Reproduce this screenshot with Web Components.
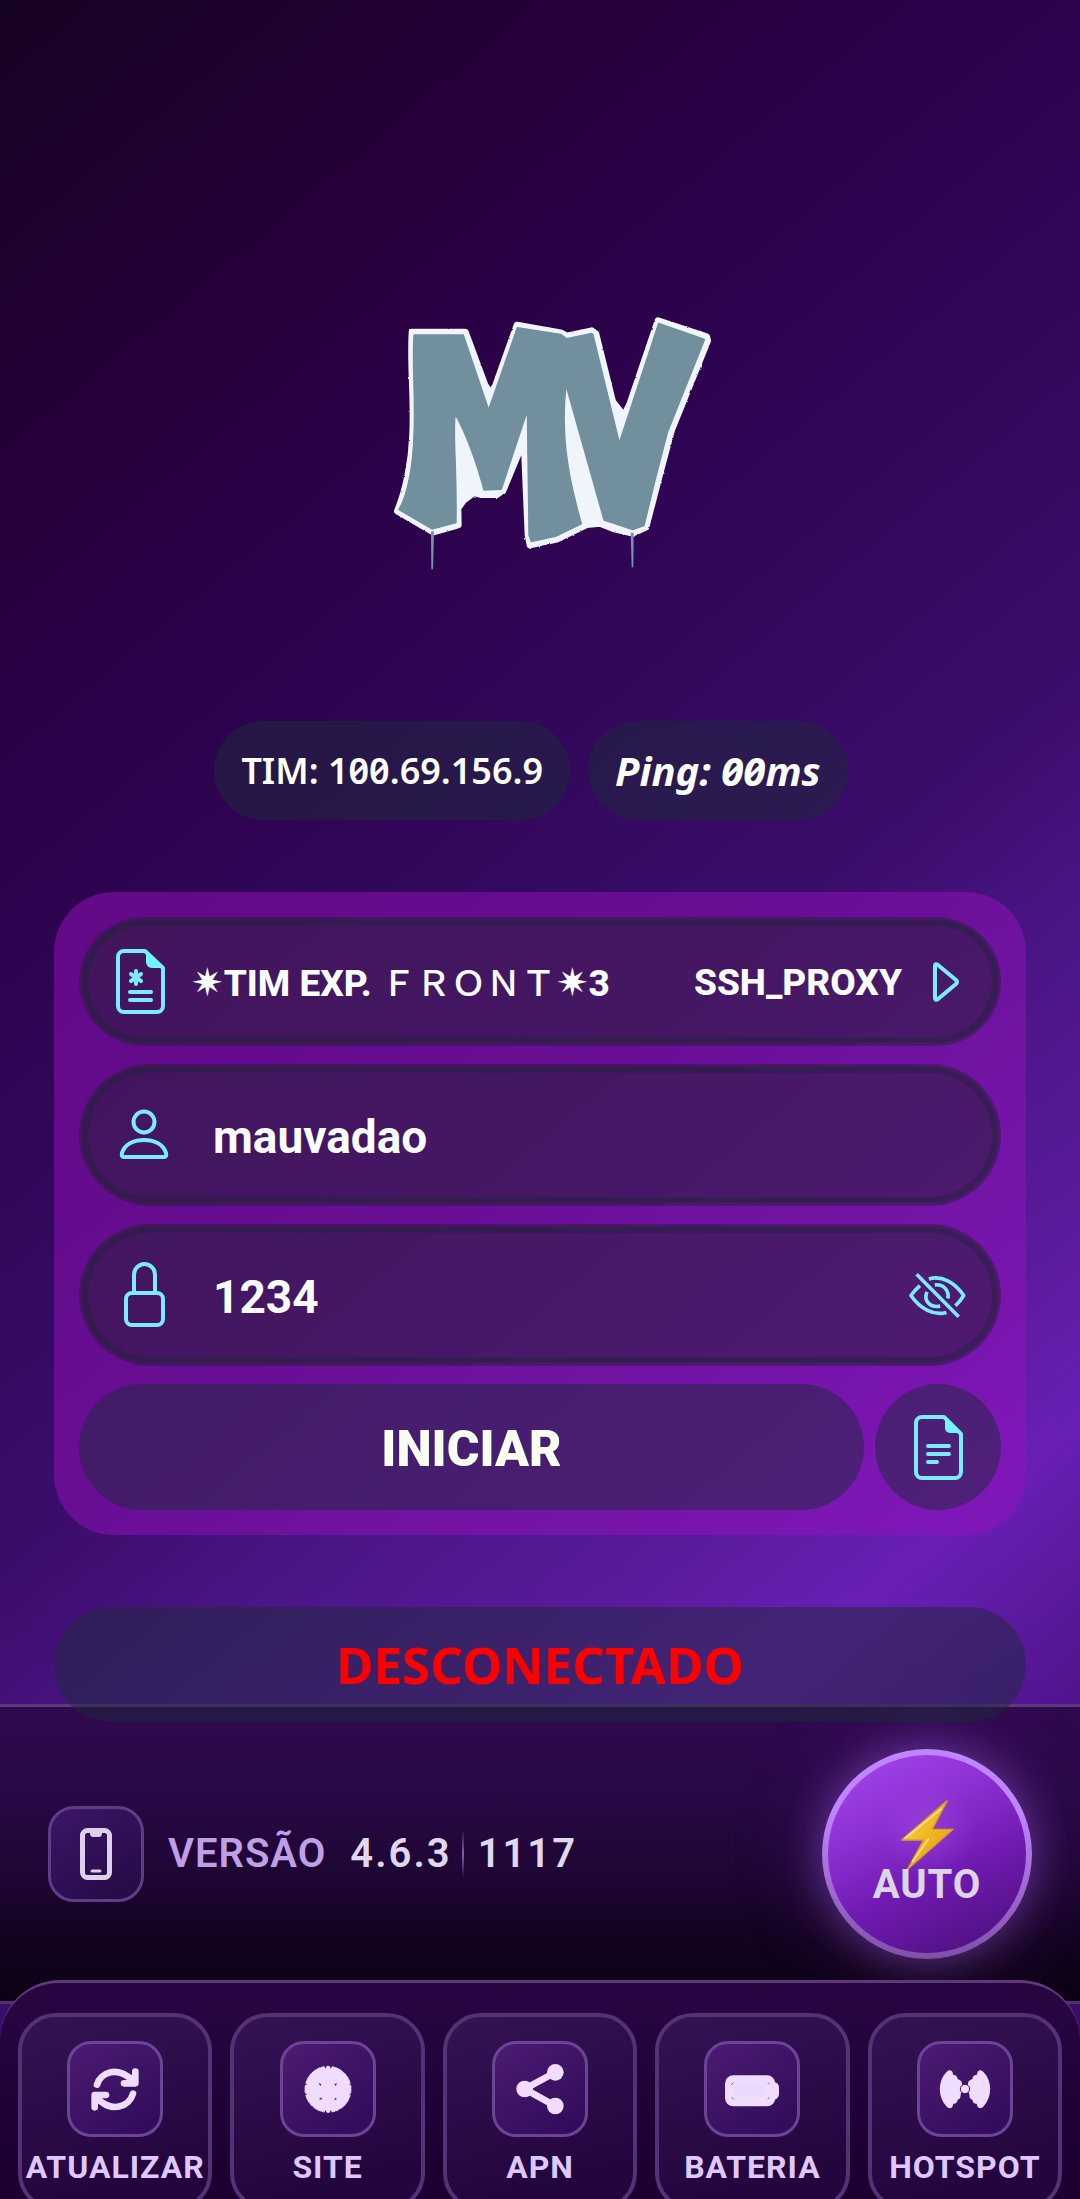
<!DOCTYPE html>
<html lang="pt-BR">
<head>
<meta charset="utf-8">
<meta name="viewport" content="width=device-width, initial-scale=1">
<title>MV</title>
<style>
  html, body { margin: 0; height: 100%; background: #170322; }
</style>
</head>
<body>
<mv-app></mv-app>
<script>
const define = (name, html, setup) => {
  const template = document.createElement('template');
  template.innerHTML = html;
  customElements.define(name, class extends HTMLElement {
    constructor() {
      super();
      this.attachShadow({ mode: 'open' }).append(template.content.cloneNode(true));
    }
    connectedCallback() { if (setup) setup(this, this.shadowRoot); }
  });
};

const ICONS = {
  config: ['0 0 49 65', 49, 65, `<path d="M29 2H8a6 6 0 0 0-6 6v49a6 6 0 0 0 6 6h33a6 6 0 0 0 6-6V19z"/><path d="M30 1l18 18H36a6 6 0 0 1-6-6z" fill="#6ff6ff" stroke="none"/><path d="M14 43h21M14 51h21M20 22v13M15 25l10 7M25 25l-10 7" stroke-linecap="round"/>`],
  doc: ['0 0 49 65', 49, 65, `<path d="M30 2H8a6 6 0 0 0-6 6v49a6 6 0 0 0 6 6h33a6 6 0 0 0 6-6V19z"/><path d="M31 1l17 17H36a5 5 0 0 1-5-5z" fill="#6ff6ff" stroke="none"/><path d="M14 31h21M14 39h21M14 47h9" stroke-linecap="round"/>`],
  user: ['0 0 50 50', 50, 50, `<circle cx="25" cy="12" r="10.500"/><path d="M5 47h40q3 0 2-4c-3-9-12-13-22-13S6 34 3 43q-1 4 2 4z"/>`],
  lock: ['0 0 50 66', 50, 66, `<rect x="7" y="31" width="37" height="32" rx="6"/><path d="M15 31V13a10.500 11 0 0 1 21 0v18"/>`],
  play: ['0 0 27 40', 27, 40, `<path d="M3 4q0-3 3-1l18 15q2 2 0 4L6 37q-3 2-3-1z"/>`],
  eye: ['927 213 172 140', 57, 47, `<g stroke-width="11"><path d="M950 219L1077 347"/><path d="M960 253Q944 267 933 283C960 323 1003 345 1040 334M987 233C1025 221 1066 244 1092 283Q1082 300 1067 314"/><path d="M981 272C970 300 992 321 1021 315M1005 251C1033 248 1049 270 1044 292"/></g>`],
  phone: ['0 0 32 52', 32, 52, `<rect x="2.500" y="2.500" width="27" height="47" rx="5" stroke-width="5"/><path d="M10 2h12v3q0 4-3 4h-6q-3 0-3-4z" fill="currentColor" stroke="none"/><path d="M12 43h8" stroke-width="3" stroke-linecap="round"/>`],
  bolt: ['1014 650 166 216', 55, 72, `<defs><linearGradient id="b" x1="0" y1="0" x2="1" y2="1"><stop offset="0" stop-color="#ffd75a"/><stop offset=".5" stop-color="#f0b624"/><stop offset="1" stop-color="#d89a18"/></linearGradient></defs><path d="M1156 655L1111 741H1174L1037 861L1085 773H1019Z" fill="url(#b)" stroke="#dfa01c" stroke-width="4" stroke-linejoin="round"/><path d="M1138 680L1030 767M1100 770L1052 838" stroke="#ffe58a" stroke-width="5" stroke-linecap="round"/>`],
  refresh: ['255 296 180 180', 60, 60, `<g stroke-width="20" stroke-linecap="round" stroke-linejoin="round"><path d="M291 373C302 337 352 313 402 364M406 334V369H372M284 441V404H318M399 400C388 439 334 461 288 410"/></g>`],
  site: ['894 296 180 180', 60, 60, `<circle cx="984" cy="387" r="69" fill="currentColor" stroke="none"/><circle cx="984" cy="387" r="69" stroke-width="3" stroke-dasharray="27 3 11 2"/><g fill="#3c1462" stroke="none"><path d="M972 316l5 9 3-9zM989 316l3 9 5-9zM972 458l5-9 3 9zM989 458l3-9 5 9zM913 368l9 4-9 3zM1056 368l-9 4 9 3zM913 398l9 4-9 3zM1056 398l-9 4 9 3z"/><path d="M956 369l8 2-3 6zM1011 369l-8 2 4 6zM957 416l8 2-1-7zM1011 416l-8 3 2-7z"/></g>`],
  apn: ['270 296 180 180', 60, 60, `<path d="M406 336L314 386L406 437" stroke-width="20"/><g fill="currentColor" stroke="none"><circle cx="406" cy="336" r="25"/><circle cx="314" cy="386" r="25"/><circle cx="406" cy="437" r="25"/></g>`],
  battery: ['906 296 180 180', 60, 60, `<rect x="915" y="345" width="151" height="93" rx="25" fill="currentColor" stroke="none"/><rect x="1040" y="365" width="37" height="53" rx="16" fill="currentColor" stroke="none"/><path d="M934 374l6-7M1048 371l-4-4M935 411l6 6M1048 412l-5 4" stroke="#3c1462" stroke-width="2"/><rect x="944" y="376" width="90" height="32" fill="#e8d8fb" stroke="none"/>`],
  hotspot: ['465 296 180 180', 60, 60, `<g fill="currentColor" stroke="none"><path id="w" d="M517 334Q508 325 499 336C473 362 473 411 499 438Q508 449 517 440L520 430Q531 431 533 418Q543 416 542 402L548 386L546 371Q547 361 533 356Q531 343 520 344Z"/><use href="#w" transform="translate(1110 0) scale(-1 1)"/></g><circle cx="555" cy="386" r="14" fill="currentColor" stroke="#3c1462" stroke-width="3"/>`]
};

define('mv-icon', `
<style>:host { display: block; flex: none; } svg { display: block; overflow: visible; }</style>
<svg fill="none" stroke="currentColor" stroke-width="4" stroke-linejoin="round" aria-hidden="true"></svg>`,
(el, root) => {
  const [box, w, h, art] = ICONS[el.getAttribute('name')];
  const svg = root.querySelector('svg');
  svg.setAttribute('viewBox', box);
  svg.setAttribute('width', w);
  svg.setAttribute('height', h);
  svg.innerHTML = art;
});

const icon = name => {
  const node = document.createElement('mv-icon');
  node.setAttribute('name', name);
  return node;
};

define('mv-logo', `
<style>:host { display: block; } svg { display: block; margin: 0 auto; }</style>
<svg width="360" height="300" viewBox="-30 0 1080 900" role="img" aria-label="MV">
  <defs>
    <filter id="spray" x="-5%" y="-5%" width="110%" height="110%">
      <feTurbulence type="fractalNoise" baseFrequency=".07" numOctaves="2" seed="4"/>
      <feDisplacementMap in="SourceGraphic" scale="6" xChannelSelector="R" yChannelSelector="G"/>
      <feGaussianBlur stdDeviation="2"/>
    </filter>
  </defs>
  <g stroke-linejoin="round">
    <path filter="url(#spray)" fill="#f0f5fb" stroke="#f0f5fb" stroke-width="20" d="M126 126H286L345 285L362 310L376 288L441 105L572 128L590 138L665 122L678 132L728 335L762 378L780 340L864 92L1010 140L1013 152L905 420L870 550L828 712L788 730L730 716L690 700L650 704L560 748L480 765L474 735L462 450L400 600L380 614H335L312 608L280 632L264 655L265 705L190 726L82 663C105 610 125 520 128 430C133 320 120 230 126 126Z"/>
    <path fill="#728f9d" stroke="#728f9d" stroke-width="4" d="M132 135H280L356 359L442 113L572 133L590 146L665 130L669 134L748 458L866 100L1004 148L893 425L858 560L822 707L788 719L702 690L588 286C573 420 588 540 634 700L634 702L560 738L484 755L477 735L472 362L394 598L342 600C312 490 282 420 256 373C247 430 261 520 258 698L186 717L87 659C115 610 130 520 132 430C137 320 126 230 132 135Z"/>
    <path fill="#7c91ab" d="M183 724H192L189 838H184ZM782 728H791L790 832H785Z"/>
  </g>
</svg>`);

define('mv-pill', `
<style>
  :host { display: block; box-sizing: border-box; padding: 24px 27px; border-radius: 50px; margin-right: 18px;
    background: rgba(30, 41, 59, .5); color: #fdfff8;
    font: 600 36px/51px "Noto Sans", sans-serif; font-feature-settings: "zero"; white-space: nowrap; }
  :host([strong]) { font-size: 40px; font-weight: 700; font-style: italic; }
</style><slot></slot>`);

const fieldBox = `
  box-sizing: border-box; width: 100%; border: 3px solid transparent; border-radius: 72px;
  background: rgba(34, 31, 50, .5); background-clip: border-box; background-origin: border-box;
  box-shadow: inset 0 0 0 6px rgba(30, 36, 56, .4);
  display: flex; align-items: center; color: #f8fdfb;`;

define('mv-server', `
<style>
  :host { display: block; }
  button { ${fieldBox} height: 129px; margin: 0; padding: 0 39px 0 34px; text-align: left;
    font: 800 37px/48px Roboto, "DejaVu Sans", sans-serif; white-space: nowrap; }
  mv-icon { color: #7cebff; }
  .name { flex: 1; margin: 2px 0 0 26px; }
  .mode { margin: 2px 30px 0 0; }
</style>
<button type="button">
  <mv-icon name="config"></mv-icon>
  <span class="name"><slot name="name"></slot></span>
  <span class="mode"><slot name="mode"></slot></span>
  <mv-icon name="play"></mv-icon>
</button>`);

define('mv-field', `
<style>
  :host { display: block; }
  .row { ${fieldBox} height: 142px; padding: 0 32px 0 37px; color: #7cebff; }
  label { margin-right: 44px; }
  input { flex: 1; min-width: 0; border: 0; padding: 0; margin: 4px 0 0; background: none; outline: none;
    color: #f8fdfb; font: 700 46px/60px Roboto, sans-serif; }
  button { border: 0; padding: 0; background: none; color: inherit; }
</style>
<div class="row"><label for="f"></label><input id="f"></div>`,
(el, root) => {
  const label = root.querySelector('label');
  const input = root.querySelector('input');
  label.replaceChildren(icon(el.getAttribute('icon')));
  input.setAttribute('aria-label', el.getAttribute('label'));
  input.value = el.getAttribute('value');
  if (el.hasAttribute('toggle')) {
    const toggle = document.createElement('button');
    toggle.type = 'button';
    toggle.setAttribute('aria-label', 'Ocultar senha');
    toggle.append(icon('eye'));
    root.querySelector('.row').append(toggle);
  }
});

define('mv-actions', `
<style>
  :host { display: flex; gap: 11px; }
  button { border: 0; margin: 0; padding: 0; height: 126px; border-radius: 63px; background: rgba(30, 41, 59, .5);
    color: #f8fff2; font: 900 50px/60px Roboto, sans-serif; }
  .start { flex: 1; padding-top: 4px; }
  .log { flex: none; width: 126px; display: grid; place-items: center; color: #7cebff; }
</style>
<button class="start" type="button"><slot></slot></button>
<button class="log" type="button" aria-label="Log"><mv-icon name="doc"></mv-icon></button>`);

define('mv-card', `
<style>
  :host { display: flex; flex-direction: column; gap: 18px; padding: 25px; border-radius: 60px;
    background: rgba(150, 16, 190, .5); }
</style><slot></slot>`);

define('mv-status', `
<style>
  :host { display: block; border-radius: 58px; padding: 20px 0; text-align: center; position: relative; z-index: 1;
    background: rgba(30, 41, 59, .5); color: #f00; font: 700 51px/75px "Noto Sans", sans-serif; }
</style><slot></slot>`);

define('mv-version', `
<style>
  :host { display: flex; align-items: center; box-sizing: border-box; height: 300px; padding: 0 48px; margin-top: -18px;
    border-top: 3px solid #5c3a7a; border-bottom: 3px solid #50306c;
    background: linear-gradient(#30094f 0%, #280945 30%, #1d0633 58%, #12031e 80%, #0d0214 100%);
    color: #e0d8ec; font: 600 40px/48px Roboto, sans-serif; letter-spacing: 2px; }
  .badge { box-sizing: border-box; width: 96px; height: 96px; border: 3px solid #5d3d85; border-radius: 26px;
    display: grid; place-items: center; background: linear-gradient(145deg, #3c1667, #240a44); color: #dcd0ea; }
  .label { color: #bf9fe6; margin: 0 24px; letter-spacing: 1px; }
  .line { width: 2px; height: 48px; margin: 0 14px 0 10px; background: linear-gradient(transparent, #8a5fb5, transparent); }
  button { box-sizing: border-box; width: 210px; height: 210px; margin-left: auto; padding: 0 0 4px; border: 6px solid transparent;
    border-radius: 50%; color: #dcd5e5; font: 700 40px/40px Roboto, sans-serif; letter-spacing: 1px;
    display: flex; flex-direction: column; align-items: center; justify-content: center;
    background: radial-gradient(circle at 50% 38%, rgba(180, 90, 240, .35), transparent 30%) padding-box,
      linear-gradient(155deg, #9f43ea 8%, #8a2fd0 35%, #701ab2 60%, #4c107c 95%) padding-box,
      linear-gradient(#c084ff 30%, #8050a8) border-box;
    box-shadow: 0 0 40px rgba(180, 110, 255, .4), 0 0 90px rgba(150, 70, 220, .25); }
  mv-icon + span { margin-top: -6px; }
</style>
<span class="badge"><mv-icon name="phone"></mv-icon></span>
<span class="label">VERSÃO</span>
<span>4.6.3</span><span class="line"></span><span>1117</span>
<button type="button"><mv-icon name="bolt"></mv-icon><span>AUTO</span></button>`);

define('mv-tab', `
<style>
  :host { display: block; flex: 1 1 0; min-width: 0; }
  a { box-sizing: border-box; height: 198px; display: flex; flex-direction: column; align-items: center; padding-top: 24px;
    border: 4px solid #553176; border-radius: 38px; background: linear-gradient(165deg, #341353, #24063f 80%);
    color: #dfc8ff; text-decoration: none; font: 700 32px/36px Roboto, sans-serif; letter-spacing: 1px; white-space: nowrap; }
  .badge { box-sizing: border-box; width: 96px; height: 96px; border: 3px solid #6b4493; border-radius: 24px;
    display: grid; place-items: center; background: linear-gradient(145deg, #4b1b73, #2f0b58); color: #f0dcff; margin-bottom: 12px; }
</style>
<a href="#"><span class="badge"></span><slot></slot></a>`,
(el, root) => root.querySelector('.badge').replaceChildren(icon(el.getAttribute('icon'))));

define('mv-tabs', `
<style>
  :host { display: block; position: relative; margin-top: -24px; background: linear-gradient(transparent 24px, #3a0d6a 24px); }
  nav { display: flex; gap: 18px; padding: 30px 18px; border-top: 3px solid #5c3a7a; border-radius: 60px 60px 0 0;
    background: linear-gradient(#280643, #1b0031 75%); }
</style><nav><slot></slot></nav>`);

define('mv-app', `
<style>
  :host { display: block; height: 100vh; overflow: hidden;
    background: linear-gradient(140deg, #160321 0%, #27003d 17%, #2c024c 28%, #350a62 44%, #3b0d6c 51%, #491583 58%, #5a1a9c 68%, #691fb4 75%, #50148c 84%, #3c0c6c 92%, #320860 100%); }
  main { padding: 290px 54px 0; }
  .info { display: flex; justify-content: center; margin: 131px 0 72px; }
  mv-card { margin-bottom: 72px; }
  .wide { font: 500 35px/48px "Noto Sans CJK JP", sans-serif; }
  .star { font: 700 39px/48px "DejaVu Sans", sans-serif; }
</style>
<main>
  <mv-logo></mv-logo>
  <div class="info"><mv-pill>TIM: 100.69.156.9</mv-pill><mv-pill strong>Ping: 00ms</mv-pill></div>
  <mv-card>
    <mv-server><span slot="name"><span class="star">✷</span>TIM EXP. <span class="wide">ＦＲＯＮＴ</span><span class="star">✷</span>3</span><span slot="mode">SSH_PROXY</span></mv-server>
    <mv-field icon="user" label="Usuário" value="mauvadao"></mv-field>
    <mv-field icon="lock" label="Senha" value="1234" toggle></mv-field>
    <mv-actions>INICIAR</mv-actions>
  </mv-card>
  <mv-status>DESCONECTADO</mv-status>
</main>
<mv-version></mv-version>
<mv-tabs>
  <mv-tab icon="refresh">ATUALIZAR</mv-tab>
  <mv-tab icon="site">SITE</mv-tab>
  <mv-tab icon="apn">APN</mv-tab>
  <mv-tab icon="battery">BATERIA</mv-tab>
  <mv-tab icon="hotspot">HOTSPOT</mv-tab>
</mv-tabs>`);
</script>
</body>
</html>
